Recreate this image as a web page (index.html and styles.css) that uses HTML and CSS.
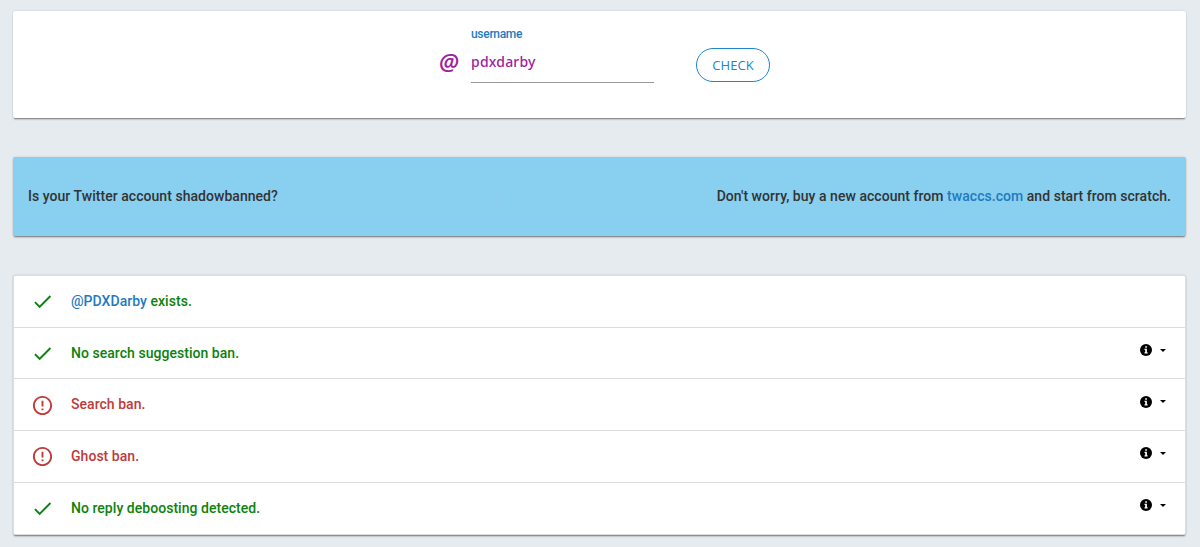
FILE: index.html
```html
<!DOCTYPE html>
<html lang="en">
<head>
  <meta charset="UTF-8">
  <meta name="viewport" content="width=device-width, initial-scale=1.0">
  <title>Shadowban Test</title>
  <link rel="stylesheet" href="styles.css">
</head>
<body>
  <svg class="sprite" width="0" height="0">
    <symbol id="check" viewBox="0 0 24 24">
      <path d="M9 16.17L4.83 12l-1.42 1.41L9 19 21 7l-1.41-1.41z"/>
    </symbol>
    <symbol id="error" viewBox="0 0 24 24">
      <path d="M11 15h2v2h-2zm0-8h2v6h-2zm.99-5C6.47 2 2 6.48 2 12s4.47 10 9.99 10C17.52 22 22 17.52 22 12S17.52 2 11.99 2zM12 20c-4.42 0-8-3.58-8-8s3.58-8 8-8 8 3.58 8 8-3.58 8-8 8z"/>
    </symbol>
    <symbol id="info" viewBox="0 0 12 12">
      <circle cx="6" cy="6" r="6"/>
      <path fill="#fff" d="M5.2 2.2h1.7v1.6H5.2zM4.5 4.8h2.4v3.5h.7v1.2H4.5V8.3h.7V6h-.7z"/>
    </symbol>
  </svg>

  <form class="card search">
    <span class="at">@</span>
    <div class="field">
      <label for="username">username</label>
      <input id="username" type="text" value="pdxdarby" spellcheck="false">
    </div>
    <button class="check-btn" type="button">CHECK</button>
  </form>

  <div class="card banner">
    <span>Is your Twitter account shadowbanned?</span>
    <span class="dot"></span>
    <span class="offer">Don't worry, buy a new account from <a href="#">twaccs.com</a> and start from scratch.</span>
  </div>

  <ul class="card results">
    <li class="ok">
      <svg class="icon"><use href="#check"/></svg>
      <span><a href="#">@PDXDarby</a> exists.</span>
    </li>
    <li class="ok">
      <svg class="icon"><use href="#check"/></svg>
      <span>No search suggestion ban.</span>
      <div class="more"><svg class="info"><use href="#info"/></svg><i class="caret"></i></div>
    </li>
    <li class="ban">
      <svg class="icon"><use href="#error"/></svg>
      <span>Search ban.</span>
      <div class="more"><svg class="info"><use href="#info"/></svg><i class="caret"></i></div>
    </li>
    <li class="ban">
      <svg class="icon"><use href="#error"/></svg>
      <span>Ghost ban.</span>
      <div class="more"><svg class="info"><use href="#info"/></svg><i class="caret"></i></div>
    </li>
    <li class="ok">
      <svg class="icon"><use href="#check"/></svg>
      <span>No reply deboosting detected.</span>
      <div class="more"><svg class="info"><use href="#info"/></svg><i class="caret"></i></div>
    </li>
  </ul>
</body>
</html>
```
FILE: styles.css
```css
* {
  box-sizing: border-box;
}

body {
  margin: 0;
  padding: 11px 14px 11px 13px;
  background-color: #e5ebef;
  color: #333;
  font-family: Roboto, Arial, sans-serif;
  font-size: 14px;
  font-weight: 500;
  letter-spacing: 0.04px;
}

a {
  color: #1f7bc1;
  text-decoration: none;
}

.sprite {
  display: block;
}

.card {
  margin: 0 0 39px;
  border-radius: 2px;
  background-color: #fff;
  box-shadow: 0 2px 2px -1px rgba(0, 0, 0, 0.5), 0 0 2px rgba(0, 0, 0, 0.15);
}

/* username form */
.search {
  display: flex;
  align-items: flex-start;
  height: 107px;
  padding: 16px 0 0 426px;
}

.at {
  width: 32px;
  padding-top: 21px;
  color: #a020a0;
  font-family: "Open Sans", sans-serif;
  font-size: 23px;
  font-weight: 600;
  font-style: italic;
  line-height: 28px;
  letter-spacing: 0;
}

.field {
  width: 183px;
}

.field label {
  display: block;
  color: #1f7bc1;
  font-size: 12px;
  line-height: 15px;
  letter-spacing: -0.3px;
}

.field input {
  display: block;
  width: 183px;
  height: 41px;
  padding: 0 0 2px;
  border: none;
  border-bottom: 1px solid #999;
  outline: none;
  background: none;
  color: #a020a0;
  font-family: "Noto Sans", sans-serif;
  font-size: 14px;
  font-weight: 500;
  letter-spacing: 0.2px;
}

.check-btn {
  width: 74px;
  height: 34px;
  margin: 21px 0 0 42px;
  padding: 0;
  border: 1px solid #2085cb;
  border-radius: 17px;
  background: none;
  color: #2085cb;
  font-family: "Open Sans", sans-serif;
  font-size: 13px;
  letter-spacing: 0.1px;
}

/* ad */
.banner {
  display: flex;
  align-items: center;
  height: 79px;
  padding: 0 15px 2px;
  background-color: #89cff0;
}

.dot {
  width: 2px;
  height: 2px;
  margin: 2px 0 0 218px;
  background-color: #a9c5d2;
}

.offer {
  margin-left: auto;
}

/* test results */
.results {
  margin-bottom: 0;
  padding: 0;
  border: 1px solid #ddd;
  list-style: none;
}

.results li {
  display: flex;
  align-items: center;
  height: 51.7px;
  padding: 0 19px 1px 17px;
  border-bottom: 1px solid #ddd;
}

.results li:last-child {
  border-bottom: none;
  padding-bottom: 2px;
}

.icon {
  width: 23px;
  height: 23px;
  margin: 2px 17px 0 0;
  fill: currentColor;
}

.ok {
  color: #0c820c;
}

.ban {
  color: #c03a3a;
}

.more {
  display: flex;
  align-items: center;
  gap: 8px;
  margin: 0 0 5px auto;
  color: #000;
}

.info {
  width: 12px;
  height: 12px;
}

.caret {
  border-top: 3px solid #000;
  border-left: 3.5px solid transparent;
  border-right: 3.5px solid transparent;
}
```
